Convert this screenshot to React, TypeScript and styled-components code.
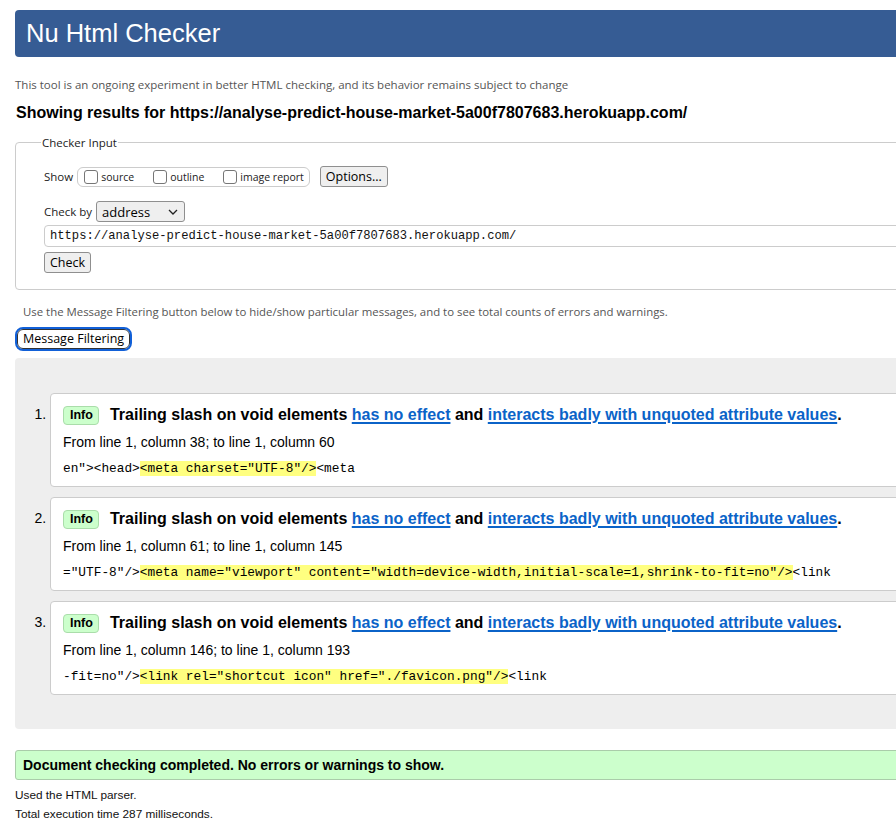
import React from 'react';
import styled, { createGlobalStyle } from 'styled-components';

const GlobalStyle = createGlobalStyle`
  html, body {
    margin: 0;
    padding: 0;
    overflow: hidden;
    background: #fff;
  }
  body {
    font-family: "Liberation Sans", Arial, sans-serif;
    color: #000;
  }
`;

const UI_FONT = `"Open Sans", "Noto Sans", sans-serif`;
const MONO_FONT = `"Liberation Mono", "DejaVu Sans Mono", monospace`;
const LINK = '#0b63c8';

const Page = styled.div`
  width: 1120px;
  padding: 10px 0 0 15px;
`;

const Header = styled.h1`
  margin: 0;
  height: 47px;
  background: #365c94;
  border-radius: 4px;
  color: #fff;
  font-weight: normal;
  font-size: 25.5px;
  line-height: 47px;
  padding-left: 11px;
`;

const Lead = styled.p`
  margin: 20px 0 0 0;
  font-family: ${UI_FONT};
  font-size: 11.5px;
  color: #555;
  line-height: 16px;
`;

const Results = styled.h2`
  margin: 10px 0 0 1px;
  font-size: 16px;
  font-weight: bold;
  line-height: 20px;
`;

const Fieldset = styled.fieldset`
  margin: 12px 0 0 0;
  border: 1px solid #ccc;
  border-radius: 4px;
  padding: 6px 28px 16px 28px;
  min-width: 0;
`;

const Legend = styled.legend`
  font-family: ${UI_FONT};
  font-size: 11.5px;
  color: #222;
  padding: 0 1px;
  margin-left: -3px;
`;

const Row = styled.div<{ $mt?: number }>`
  display: flex;
  align-items: center;
  margin-top: ${(p) => p.$mt ?? 0}px;
  font-family: ${UI_FONT};
  font-size: 11.5px;
  color: #222;
  gap: 4px;
`;

const ShowGroup = styled.div`
  display: flex;
  align-items: center;
  border: 1px solid #ccc;
  border-radius: 6px;
  height: 18px;
  padding: 0 5px 0 6px;
  gap: 19px;
`;

const CheckLabel = styled.label`
  display: flex;
  align-items: center;
  gap: 3px;
  font-size: 10.5px;
  color: #222;
`;

const Box = styled.span`
  display: inline-block;
  width: 12px;
  height: 12px;
  border: 1px solid #767676;
  border-radius: 3px;
  background: #fff;
`;

const NativeButton = styled.button`
  font-family: ${UI_FONT};
  font-size: 12.5px;
  color: #000;
  background: #efefef;
  border: 1px solid #8f8f8f;
  border-radius: 3px;
  height: 21px;
  padding: 0 5px;
  line-height: 18px;
`;

const OptionsButton = styled(NativeButton)`
  margin-left: 6px;
`;

const Select = styled.div`
  display: flex;
  align-items: center;
  justify-content: space-between;
  width: 89px;
  height: 21px;
  box-sizing: border-box;
  border: 1px solid #8f8f8f;
  border-radius: 3px;
  background: #efefef;
  padding: 0 6px 0 5px;
  font-size: 13px;
  color: #000;
`;

const UrlInput = styled.div`
  margin-top: 3px;
  height: 22px;
  box-sizing: border-box;
  border: 1px solid #ccc;
  border-radius: 4px;
  padding: 0 5px;
  font-family: ${MONO_FONT};
  font-size: 12.15px;
  line-height: 20px;
  color: #111;
`;

const CheckButton = styled(NativeButton)`
  margin-top: 5px;
  display: block;
`;

const Note = styled.p`
  margin: 14px 0 0 8px;
  font-family: ${UI_FONT};
  font-size: 11.4px;
  color: #555;
  line-height: 16px;
`;

const FilterButton = styled.button`
  margin: 9px 0 0 2px;
  font-family: ${UI_FONT};
  font-size: 12.5px;
  color: #000;
  background: #fff;
  border: 1px solid #333;
  border-radius: 6px;
  outline: 2px solid #1160d8;
  outline-offset: 0;
  height: 20px;
  padding: 0 5px;
  line-height: 18px;
`;

const Messages = styled.div`
  margin-top: 9px;
  background: #eee;
  border-radius: 4px;
  padding: 35px 0 34px 0;
`;

const List = styled.ol`
  margin: 0;
  padding: 0 0 0 35px;
  list-style: decimal;
  font-size: 14px;
  display: flex;
  flex-direction: column;
  gap: 10px;
`;

const Item = styled.li`
  background: #fff;
  border: 1px solid #ccc;
  border-radius: 4px;
  padding: 10px 12px 9px 12px;
  &::marker {
    font-size: 14px;
  }
`;

const Title = styled.p`
  margin: 0;
  display: flex;
  align-items: center;
  font-size: 16px;
  font-weight: bold;
  line-height: 22px;
`;

const Badge = styled.span`
  display: inline-block;
  box-sizing: border-box;
  height: 19px;
  line-height: 17px;
  padding: 0 5px 0 6px;
  margin-right: 11px;
  background: #ccffcc;
  border: 1px solid #aaddaa;
  border-radius: 4px;
  font-size: 12.5px;
  font-weight: bold;
`;

const Link = styled.a`
  color: ${LINK};
  text-decoration: underline;
  text-decoration-thickness: 2px;
  text-underline-offset: 2px;
`;

const Location = styled.p`
  margin: 6px 0 0 0;
  font-size: 14px;
  line-height: 20px;
`;

const Extract = styled.p`
  margin: 9px 0 0 0;
  font-family: ${MONO_FONT};
  font-size: 12.8px;
  line-height: 16px;
  white-space: pre;
`;

const Mark = styled.mark`
  background: #ffff80;
  color: inherit;
`;

const Success = styled.p`
  margin: 21px 0 0 0;
  height: 30px;
  box-sizing: border-box;
  background: #ccffcc;
  border: 1px solid #aaccaa;
  border-radius: 3px;
  padding-left: 7px;
  font-size: 14px;
  font-weight: bold;
  line-height: 28px;
`;

const Footer = styled.div`
  margin-top: 6px;
`;

const Stats = styled.p`
  margin: 0;
  font-size: 11.8px;
  color: #111;
  line-height: 19px;
`;

const Chevron = () => (
  <svg width="10" height="6" viewBox="0 0 10 6" fill="none">
    <path d="M1 1l4 4 4-4" stroke="#222" strokeWidth="1.3" />
  </svg>
);

type Msg = { from: string; before: string; hit: string; after: string };

const messages: Msg[] = [
  {
    from: 'From line 1, column 38; to line 1, column 60',
    before: 'en"><head>',
    hit: '<meta charset="UTF-8"/>',
    after: '<meta',
  },
  {
    from: 'From line 1, column 61; to line 1, column 145',
    before: '="UTF-8"/>',
    hit: '<meta name="viewport" content="width=device-width,initial-scale=1,shrink-to-fit=no"/>',
    after: '<link',
  },
  {
    from: 'From line 1, column 146; to line 1, column 193',
    before: '-fit=no"/>',
    hit: '<link rel="shortcut icon" href="./favicon.png"/>',
    after: '<link',
  },
];

const App: React.FC = () => (
  <Page>
    <GlobalStyle />
    <Header>Nu Html Checker</Header>
    <Lead>This tool is an ongoing experiment in better HTML checking, and its behavior remains subject to change</Lead>
    <Results>Showing results for https://analyse-predict-house-market-5a00f7807683.herokuapp.com/</Results>

    <Fieldset>
      <Legend>Checker Input</Legend>
      <Row $mt={10}>
        <span>Show</span>
        <ShowGroup>
          <CheckLabel><Box />source</CheckLabel>
          <CheckLabel><Box />outline</CheckLabel>
          <CheckLabel><Box />image report</CheckLabel>
        </ShowGroup>
        <OptionsButton>Options...</OptionsButton>
      </Row>
      <Row $mt={14}>
        <span>Check by</span>
        <Select>
          <span>address</span>
          <Chevron />
        </Select>
      </Row>
      <UrlInput>https://analyse-predict-house-market-5a00f7807683.herokuapp.com/</UrlInput>
      <CheckButton>Check</CheckButton>
    </Fieldset>

    <Note>Use the Message Filtering button below to hide/show particular messages, and to see total counts of errors and warnings.</Note>
    <FilterButton>Message Filtering</FilterButton>

    <Messages>
      <List>
        {messages.map((m) => (
          <Item key={m.from}>
            <Title>
              <Badge>Info</Badge>
              <span>
                Trailing slash on void elements <Link href="#">has no effect</Link> and{' '}
                <Link href="#">interacts badly with unquoted attribute values</Link>.
              </span>
            </Title>
            <Location>{m.from}</Location>
            <Extract>
              {m.before}
              <Mark>{m.hit}</Mark>
              {m.after}
            </Extract>
          </Item>
        ))}
      </List>
    </Messages>

    <Success>Document checking completed. No errors or warnings to show.</Success>
    <Footer>
      <Stats>Used the HTML parser.</Stats>
      <Stats>Total execution time 287 milliseconds.</Stats>
    </Footer>
  </Page>
);

export default App;
